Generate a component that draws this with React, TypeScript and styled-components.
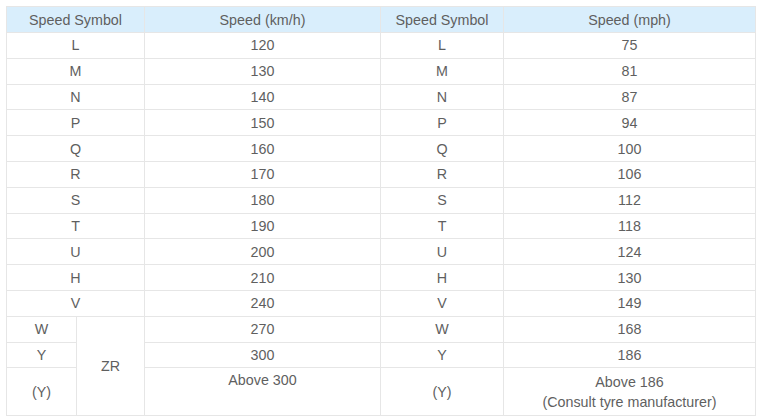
import React from "react";
import styled, { createGlobalStyle } from "styled-components";

const GlobalStyle = createGlobalStyle`
  html, body { margin: 0; padding: 0; background: #ffffff; }
  body { font-family: "Liberation Sans", Arial, sans-serif; }
`;

const Page = styled.div`
  padding: 6px 5px 0 6px;
`;

const Table = styled.table`
  border-collapse: collapse;
  table-layout: fixed;
  width: 749px;
  font-family: "Liberation Sans", Arial, sans-serif;
  font-size: 14.3px;
  color: #5f5f5f;
`;

const HeadCell = styled.th`
  background: #d9eefc;
  font-weight: normal;
  height: 25px;
  padding: 0;
  line-height: 20px;
  text-align: center;
  border: 1px solid #e6e6e6;
  color: #5f5f5f;
`;

const Cell = styled.td<{ $top?: boolean }>`
  height: 24.8px;
  padding: 0;
  line-height: 20px;
  text-align: center;
  vertical-align: ${(p) => (p.$top ? "top" : "middle")};
  border: 1px solid #e6e6e6;
`;

const TallCell = styled(Cell)`
  height: 45px;
  padding: ${(p) => (p.$top ? "2px 0 0" : "0")};
`;

type Row = [string, string, string, string];

const rows: Row[] = [
  ["L", "120", "L", "75"],
  ["M", "130", "M", "81"],
  ["N", "140", "N", "87"],
  ["P", "150", "P", "94"],
  ["Q", "160", "Q", "100"],
  ["R", "170", "R", "106"],
  ["S", "180", "S", "112"],
  ["T", "190", "T", "118"],
  ["U", "200", "U", "124"],
  ["H", "210", "H", "130"],
  ["V", "240", "V", "149"],
];

export default function App() {
  return (
    <>
      <GlobalStyle />
      <Page>
        <Table>
          <colgroup>
            <col style={{ width: 70 }} />
            <col style={{ width: 68 }} />
            <col style={{ width: 236 }} />
            <col style={{ width: 123 }} />
            <col style={{ width: 252 }} />
          </colgroup>
          <thead>
            <tr>
              <HeadCell colSpan={2}>Speed Symbol</HeadCell>
              <HeadCell>Speed (km/h)</HeadCell>
              <HeadCell>Speed Symbol</HeadCell>
              <HeadCell>Speed (mph)</HeadCell>
            </tr>
          </thead>
          <tbody>
            {rows.map((r) => (
              <tr key={r[0]}>
                <Cell colSpan={2}>{r[0]}</Cell>
                <Cell>{r[1]}</Cell>
                <Cell>{r[2]}</Cell>
                <Cell>{r[3]}</Cell>
              </tr>
            ))}
            <tr>
              <Cell>W</Cell>
              <Cell rowSpan={3}>ZR</Cell>
              <Cell>270</Cell>
              <Cell>W</Cell>
              <Cell>168</Cell>
            </tr>
            <tr>
              <Cell>Y</Cell>
              <Cell>300</Cell>
              <Cell>Y</Cell>
              <Cell>186</Cell>
            </tr>
            <tr>
              <TallCell>(Y)</TallCell>
              <TallCell $top>Above 300</TallCell>
              <TallCell>(Y)</TallCell>
              <TallCell>
                Above 186
                <br />
                (Consult tyre manufacturer)
              </TallCell>
            </tr>
          </tbody>
        </Table>
      </Page>
    </>
  );
}
